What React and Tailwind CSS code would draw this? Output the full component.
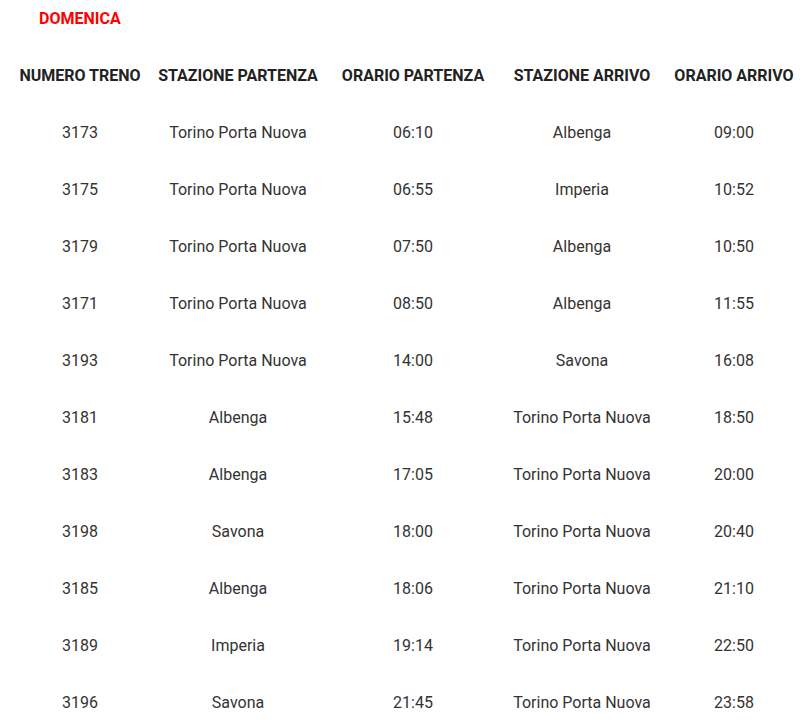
const rows = [
  ["3173", "Torino Porta Nuova", "06:10", "Albenga", "09:00"],
  ["3175", "Torino Porta Nuova", "06:55", "Imperia", "10:52"],
  ["3179", "Torino Porta Nuova", "07:50", "Albenga", "10:50"],
  ["3171", "Torino Porta Nuova", "08:50", "Albenga", "11:55"],
  ["3193", "Torino Porta Nuova", "14:00", "Savona", "16:08"],
  ["3181", "Albenga", "15:48", "Torino Porta Nuova", "18:50"],
  ["3183", "Albenga", "17:05", "Torino Porta Nuova", "20:00"],
  ["3198", "Savona", "18:00", "Torino Porta Nuova", "20:40"],
  ["3185", "Albenga", "18:06", "Torino Porta Nuova", "21:10"],
  ["3189", "Imperia", "19:14", "Torino Porta Nuova", "22:50"],
  ["3196", "Savona", "21:45", "Torino Porta Nuova", "23:58"],
];

const heads = ["NUMERO TRENO", "STAZIONE PARTENZA", "ORARIO PARTENZA", "STAZIONE ARRIVO", "ORARIO ARRIVO"];

export default function App() {
  return (
    <div className="bg-white w-[806px] h-[722px] overflow-hidden font-['Roboto',sans-serif]">
      <div className="pl-[39px] h-[37px] flex items-center text-[16px] font-bold text-[#ff0000]">DOMENICA</div>
      <div className="mt-[10px] ml-[11px] grid grid-cols-[138px_178px_172px_166px_138px] text-[#333333]">
        {heads.map((h) => (
          <div key={h} className="h-[57px] flex items-center justify-center text-[16px] font-bold text-[#222222] whitespace-nowrap">
            {h}
          </div>
        ))}
        {rows.map((r, i) =>
          r.map((c, j) => (
            <div key={i + "-" + j} className="h-[57px] flex items-center justify-center text-[16px] whitespace-nowrap">
              {c}
            </div>
          ))
        )}
      </div>
    </div>
  );
}
